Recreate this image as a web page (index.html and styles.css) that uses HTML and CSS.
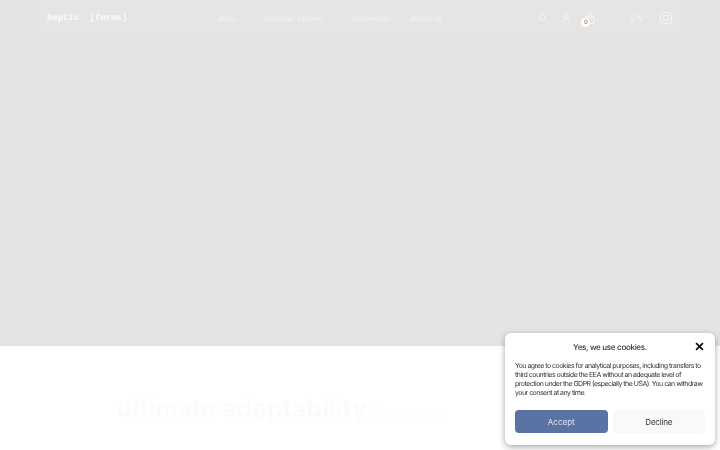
FILE: index.html
```html
<!DOCTYPE html>
<html lang="en">
<head>
  <meta charset="UTF-8">
  <meta name="viewport" content="width=device-width, initial-scale=1.0">
  <title>haptic. [forms]</title>
  <link rel="stylesheet" href="styles.css">
</head>
<body>

  <section class="hero">
    <header class="topbar">
      <a class="logo">haptic. [forms]</a>

      <nav class="menu">
        <a class="menu-item">shop <svg class="chev" viewBox="0 0 8 5"><path d="M1 1l3 3 3-3"/></svg></a>
        <a class="menu-item">modular system <svg class="chev" viewBox="0 0 8 5"><path d="M1 1l3 3 3-3"/></svg></a>
        <a class="menu-item">inspiration</a>
        <a class="menu-item">about us</a>
      </nav>

      <div class="tools">
        <svg class="icon" viewBox="0 0 12 12"><circle cx="5" cy="5" r="3.7"/><path d="M7.800 7.800l3.400 3.400"/></svg>
        <svg class="icon" viewBox="0 0 12 12"><circle cx="6" cy="3.600" r="2.800"/><path d="M1 11.500c.6-3 2.400-5 5-5s4.400 2 5 5"/></svg>
        <div class="cart">
          <svg class="icon icon-cart" viewBox="0 0 12 13"><path d="M1.500 5h9v7.500h-9z"/><path d="M4 6.500V3a2 2 0 0 1 4 0v3.500"/></svg>
          <span class="cart-count">0</span>
        </div>
      </div>

      <div class="lang">
        <span>EN</span>
        <svg class="chev" viewBox="0 0 8 5"><path d="M1 1l3 3 3-3"/></svg>
        <svg class="insta" viewBox="0 0 12 12"><rect x=".6" y=".6" width="10.800" height="10.800" rx="2.600"/><circle cx="6" cy="6" r="2.600"/><circle cx="9" cy="3" r=".4"/></svg>
      </div>
    </header>
  </section>

  <section class="intro">
    <h2 class="intro-title">ultimate adaptability <span class="intro-faded">in every</span></h2>
  </section>

  <aside class="cookies">
    <div class="cookies-head">
      <h3 class="cookies-title">Yes, we use cookies.</h3>
      <svg class="cookies-close" viewBox="0 0 10 10"><path d="M1.200 1.200l7.600 7.600M8.800 1.200L1.200 8.800"/></svg>
    </div>
    <p class="cookies-text">You agree to cookies for analytical purposes, including transfers to third countries outside the EEA without an adequate level of protection under the GDPR (especially the USA). You can withdraw your consent at any time.</p>
    <div class="cookies-buttons">
      <button class="btn btn-accept">Accept</button>
      <button class="btn btn-decline">Decline</button>
    </div>
  </aside>

</body>
</html>
```

FILE: styles.css
```css
* {
  box-sizing: border-box;
}

html, body {
  height: 100%;
}

body {
  margin: 0;
  overflow: hidden;
  background: #fff;
  font-family: "Inter", "Liberation Sans", sans-serif;
  text-rendering: geometricPrecision;
}

.hero {
  height: 346px;
  background: #e4e4e4;
  padding: 0 33px;
}

.topbar {
  height: 36px;
  display: flex;
  align-items: center;
  padding: 0 14px;
  background: #e5e5e5;
  border-radius: 0 0 8px 8px;
  color: #f4f4f4;
}

.logo {
  flex: none;
  width: 171px;
  font-family: "Liberation Mono", monospace;
  font-size: 9px;
  font-weight: 700;
  letter-spacing: -0.070px;
  color: #fafafa;
}

.menu {
  flex: none;
  display: flex;
  gap: 21px;
  font-size: 7.700px;
  color: #f3f3f3;
}

.menu-item {
  white-space: nowrap;
}

.chev {
  width: 5px;
  height: 4px;
  margin-left: 1px;
  vertical-align: 0;
  fill: none;
  stroke: #f4f4f4;
  stroke-width: 1;
}

.tools {
  flex: none;
  display: flex;
  align-items: center;
  gap: 13px;
  margin-left: 96px;
}

.icon {
  display: block;
  width: 10px;
  height: 10px;
  fill: none;
  stroke: #f6f6f6;
  stroke-width: 1.200;
}

.icon-cart {
  width: 11px;
  height: 12px;
  margin-top: -1px;
}

.cart {
  position: relative;
}

.cart-count {
  position: absolute;
  left: -3px;
  top: 5px;
  width: 9px;
  height: 9px;
  border-radius: 50%;
  background: #fff;
  color: #555;
  font-size: 6px;
  line-height: 9px;
  text-align: center;
}

.lang {
  flex: none;
  display: flex;
  align-items: center;
  margin-left: 20px;
  padding-left: 14px;
  border-left: 1px solid #e6e6e6;
  font-size: 8px;
  letter-spacing: 1.500px;
  color: #f4f4f4;
}

.insta {
  width: 12px;
  height: 12px;
  margin-left: 10px;
  fill: none;
  stroke: #f6f6f6;
  stroke-width: 1;
}

.intro {
  padding: 47px 0 0 117px;
}

.intro-title {
  margin: 0;
  font-size: 24.800px;
  font-weight: 600;
  line-height: 30px;
  letter-spacing: 0.250px;
  color: #fbfbfb;
  white-space: nowrap;
}

.intro-faded {
  font-size: 13px;
  font-weight: 400;
  letter-spacing: 3px;
  color: #fdfdfd;
}

.cookies {
  position: fixed;
  left: 505px;
  top: 333px;
  width: 210px;
  height: 112px;
  padding: 0 10px;
  background: #fff;
  border-radius: 6px;
  box-shadow: 0 2px 6px rgba(0, 0, 0, 0.35);
  color: #222;
}

.cookies-head {
  position: relative;
  height: 28px;
  display: flex;
  align-items: center;
  justify-content: center;
}

.cookies-title {
  margin: 0;
  font-size: 8px;
  font-weight: 500;
  letter-spacing: -0.300px;
  color: #333;
}

.cookies-close {
  position: absolute;
  right: 1px;
  top: 9px;
  width: 9px;
  height: 9px;
  fill: none;
  stroke: #111;
  stroke-width: 2;
}

.cookies-text {
  margin: 0;
  font-size: 7px;
  line-height: 9px;
  letter-spacing: -0.520px;
  color: #333;
}

.cookies-buttons {
  display: flex;
  gap: 5px;
  margin-top: 13px;
}

.btn {
  flex: 1;
  height: 23px;
  padding: 0;
  border: 0;
  border-radius: 4px;
  font-family: inherit;
  font-size: 8px;
}

.btn-accept {
  background: #5a72a4;
  color: #e4e8f0;
}

.btn-decline {
  background: #f9f9f9;
  color: #333;
  letter-spacing: -0.200px;
}
```
